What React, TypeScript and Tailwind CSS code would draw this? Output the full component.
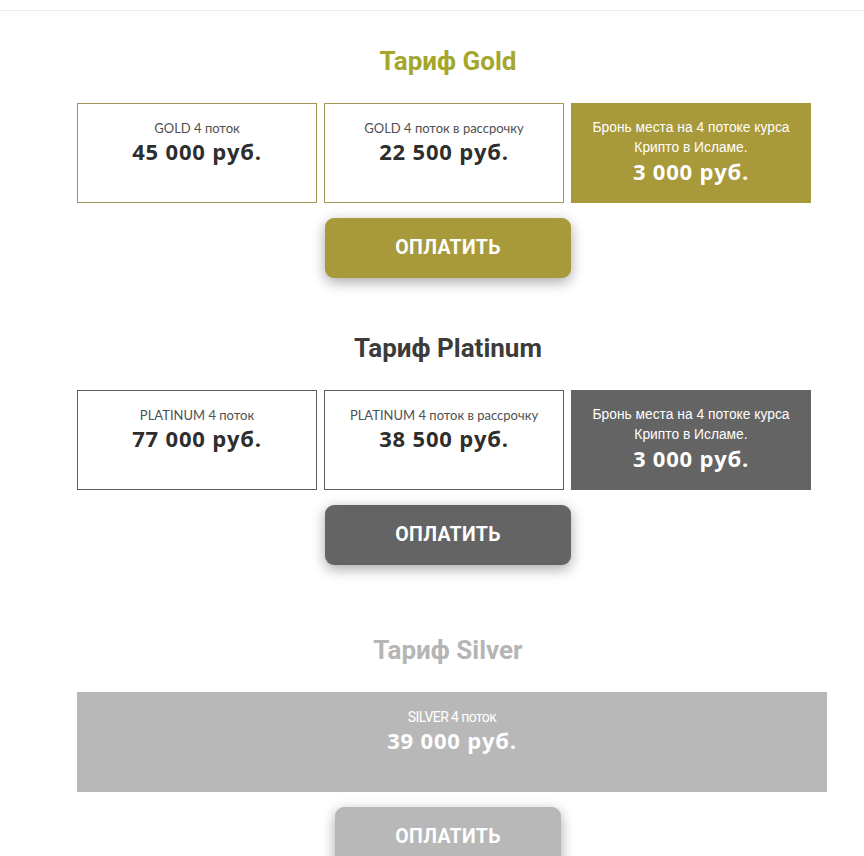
import React from 'react';

type Card = { label: React.ReactNode; price: string; filled?: boolean };

type Tariff = {
	title: string;
	titleColor: string;
	border: string;
	fill: string;
	cards: Card[];
};

const booking: Card = {
	label: (
		<>
			Бронь места на 4 потоке курса
			<br />
			Крипто в Исламе.
		</>
	),
	price: '3 000 руб.',
	filled: true,
};

const tariffs: Tariff[] = [
	{
		title: 'Тариф Gold',
		titleColor: 'text-[#a5a62c]',
		border: 'border-[#a09655]',
		fill: 'bg-[#a8993b]',
		cards: [
			{ label: 'GOLD 4 поток', price: '45 000 руб.' },
			{ label: 'GOLD 4 поток в рассрочку', price: '22 500 руб.' },
			booking,
		],
	},
	{
		title: 'Тариф Platinum',
		titleColor: 'text-[#3b3b3b]',
		border: 'border-[#5c5c5c]',
		fill: 'bg-[#646464]',
		cards: [
			{ label: 'PLATINUM 4 поток', price: '77 000 руб.' },
			{ label: 'PLATINUM 4 поток в рассрочку', price: '38 500 руб.' },
			booking,
		],
	},
];

function PayButton({ fill, wide = true }: { fill: string; wide?: boolean }) {
	return (
		<div className="flex justify-center w-[742px]">
			<button
				className={`${fill} ${wide ? 'w-[246px]' : 'w-[226px]'} h-[60px] rounded-[9px] text-white text-[19.5px] leading-[20px] font-bold tracking-[0.3px] shadow-[0_4px_14px_rgba(0,0,0,0.35)] font-['Roboto',sans-serif]`}
			>
				ОПЛАТИТЬ
			</button>
		</div>
	);
}

function Section({ t }: { t: Tariff }) {
	return (
		<section className="flex flex-col">
			<h2
				className={`w-[742px] text-center text-[26px] leading-[30px] font-bold ${t.titleColor} font-['Roboto',sans-serif]`}
			>
				{t.title}
			</h2>
			<div className="mt-[27px] flex gap-[7px]">
				{t.cards.map((c, i) =>
					c.filled ? (
						<div
							key={i}
							className={`w-[240px] h-[100px] ${t.fill} flex flex-col items-center pt-[15px] text-white text-center`}
						>
							<p className="text-[13.8px] leading-[20px] font-['Liberation_Sans',Arial,sans-serif]">
								{c.label}
							</p>
							<p className="text-[22px] leading-[26px] tracking-[0.8px] font-bold font-['Open_Sans',sans-serif]">
								{c.price}
							</p>
						</div>
					) : (
						<div
							key={i}
							className={`w-[240px] h-[100px] border ${t.border} bg-white flex flex-col items-center pt-[16px] text-center`}
						>
							<p className="text-[13px] leading-[16px] text-[#505050] font-['Lato',sans-serif]">
								{c.label}
							</p>
							<p className="text-[22px] leading-[30px] tracking-[0.8px] font-bold text-[#2e2e2e] font-['Open_Sans',sans-serif]">
								{c.price}
							</p>
						</div>
					)
				)}
			</div>
			<div className="mt-[15px]">
				<PayButton fill={t.fill} />
			</div>
		</section>
	);
}

export default function App() {
	return (
		<div className="w-[864px] h-[856px] overflow-hidden bg-white">
			<div className="h-[11px] border-b border-[#ececec]" />
			<div className="ml-[77px] pt-[35px] flex flex-col">
				<Section t={tariffs[0]} />
				<div className="mt-[55px]">
					<Section t={tariffs[1]} />
				</div>
				<section className="mt-[70px] flex flex-col">
					<h2 className="w-[742px] text-center text-[26px] leading-[30px] font-bold text-[#b5b5b5] font-['Roboto',sans-serif]">
						Тариф Silver
					</h2>
					<div className="mt-[27px] w-[750px] h-[100px] bg-[#b8b8b8] flex flex-col items-center pt-[17px] text-white text-center">
						<p className="text-[14px] leading-[16px] tracking-[-0.6px] font-['Roboto',sans-serif]">
							SILVER 4 поток
						</p>
						<p className="text-[22px] leading-[30px] tracking-[0.8px] font-bold font-['Open_Sans',sans-serif]">
							39 000 руб.
						</p>
					</div>
					<div className="mt-[15px]">
						<PayButton fill="bg-[#b8b8b8]" wide={false} />
					</div>
				</section>
			</div>
		</div>
	);
}
